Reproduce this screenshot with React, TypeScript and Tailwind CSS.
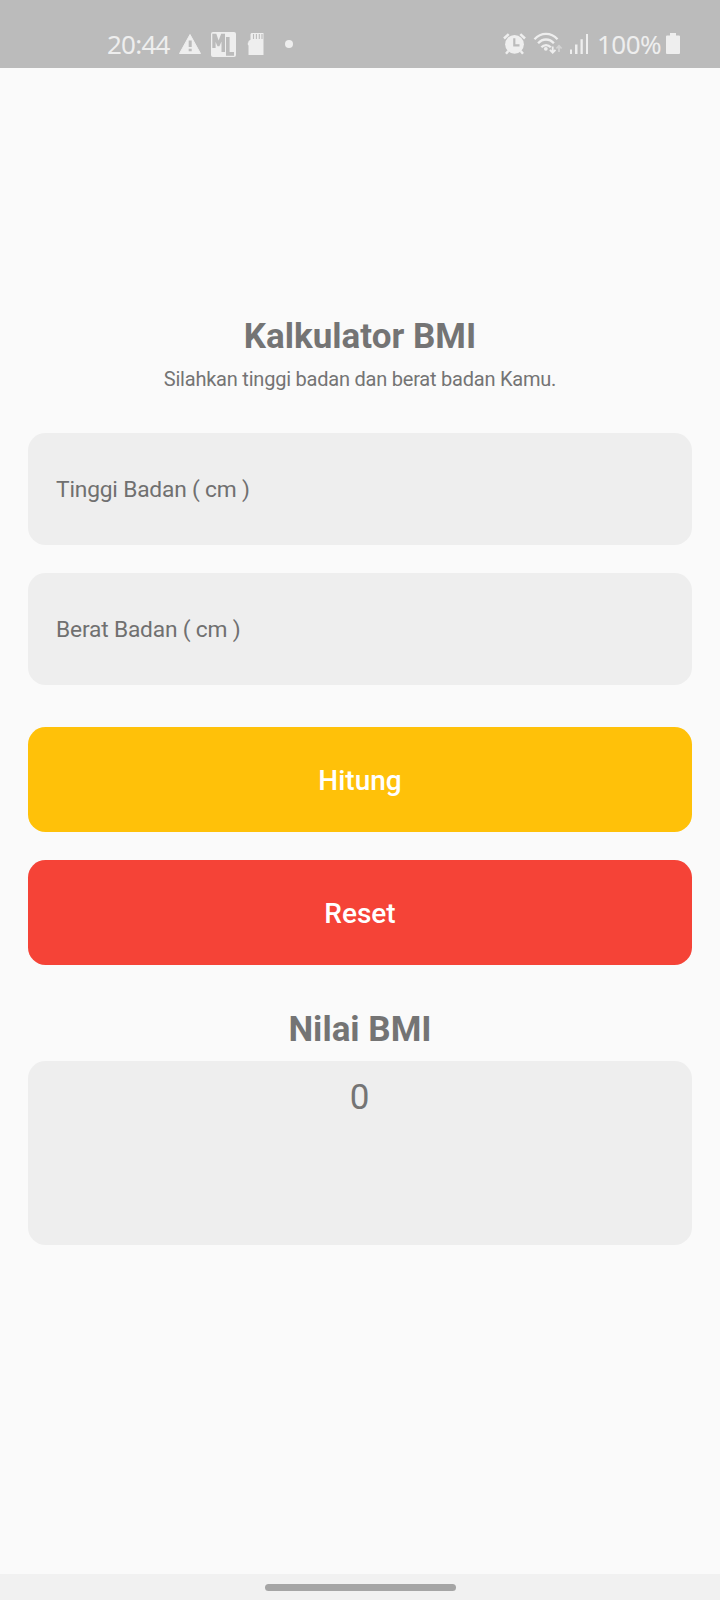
import { useState } from "react";

const fieldClass =
  "h-28 w-full rounded-[17.5px] bg-[#eeeeee] px-7 text-[22.75px] tracking-[-0.18px] text-[#707070] outline-none placeholder:text-[#707070] placeholder:opacity-100";
const buttonClass =
  "h-[105px] w-full rounded-[17.5px] pt-[3px] text-[28px] leading-[34px] font-medium text-white";

function LeftIcons() {
  return (
    <svg className="h-[68px] w-[130px]" viewBox="175 0 130 68" fill="#eeeeee">
      <path d="M190 34.5 200.5 53.5H179.5Z" stroke="#eeeeee" strokeWidth="1" strokeLinejoin="round" />
      <path d="M188.7 40.5h3v6.5h-3zM188.7 48.7h3v2.6h-3z" fill="#bbbbbb" />
      <rect x="211" y="32" width="25" height="25" rx="2" />
      <path
        d="M212.3 48V33.7h4l2.3 6.8 2.6-6.8h3.8V52h-3.5V41.5l-2.1 4.8h-1.9l-1.9-4.3v6ZM226 37h3.6v15h4.4v3.7h-8Z"
        fill="#bbbbbb"
      />
      <path d="M251.5 33h12v22h-15V45.5l-.7-.7v-2l.7-.6V41l2-1.2V34Z" />
      <path d="M253.5 34v5M256.4 34v5M259.3 34v5M262 34v5" stroke="#bbbbbb" strokeWidth="1.1" />
      <circle cx="289" cy="44" r="4" />
    </svg>
  );
}

function RightIcons() {
  return (
    <svg className="h-[68px] w-[90px]" viewBox="501 0 90 68" fill="#eeeeee">
      <circle cx="514.5" cy="44.3" r="9.4" />
      <path
        d="m504 38.5 4.7-4.4M525 38.5l-4.7-4.4M508.3 51l-2.3 2.7M520.7 51l2.3 2.7"
        stroke="#eeeeee"
        strokeWidth="2.5"
        fill="none"
      />
      <path d="M514.3 38.3v7h5.2" stroke="#bbbbbb" strokeWidth="2.2" fill="none" />
      <g fill="none" stroke="#eeeeee" strokeWidth="2.3">
        <path d="M534.5 39.2C541 32.2 551 32.2 557.5 39.2M538.1 43.3C542.5 38.2 549.5 38.2 553.9 43.3M541.4 47.3C544 44.3 548 44.3 550.8 47.3" />
        <path d="M552.7 46.5v6M549.9 49.8l2.8 2.9 2.8-2.9" strokeWidth="1.8" />
        <path d="M559 52v-6M556.4 48.5l2.6-2.8 2.6 2.8" strokeWidth="1.8" stroke="#d3d3d3" />
      </g>
      <circle cx="545.8" cy="48.8" r="1.9" />
      <path d="M570 49.5h2V54h-2zM575 44.5h2.5V54H575zM580.5 39.3h2.3V54h-2.3zM586 34h2v20h-2z" />
    </svg>
  );
}

function StatusBar() {
  return (
    <header className="flex h-[68px] items-start bg-[#bbbbbb] pr-[39px] pl-[107px] font-['Noto_Sans','Open_Sans',sans-serif] text-[26px] text-[#eeeeee]">
      <span className="w-[68px] pt-[26px] leading-9 tracking-[-0.75px]">20:44</span>
      <LeftIcons />
      <span className="flex-1" />
      <RightIcons />
      <span className="w-[74px] pt-[26px] pl-[6px] leading-9 tracking-[-0.5px]">100%</span>
      <svg className="h-[68px] w-4" viewBox="665 0 16 68" fill="#eeeeee">
        <path d="M670 33h6v2.5h3q1 0 1 1V53q0 1-1 1h-12q-1 0-1-1V36.5q0-1 1-1h3Z" />
      </svg>
    </header>
  );
}

export default function App() {
  const [height, setHeight] = useState("");
  const [weight, setWeight] = useState("");
  const [result, setResult] = useState("0");

  const calculate = () => {
    const meters = Number(height) / 100;
    if (meters > 0) setResult((Number(weight) / (meters * meters)).toFixed(1));
  };
  const reset = () => {
    setHeight("");
    setWeight("");
    setResult("0");
  };

  return (
    <div className="flex h-[1600px] w-[720px] flex-col bg-[#fafafa] font-[Roboto,sans-serif] text-[#747474]">
      <StatusBar />
      <main className="flex flex-1 flex-col px-7 pt-[248px] text-center">
        <h1 className="text-[35px] leading-[42px] font-bold">Kalkulator BMI</h1>
        <p className="mt-[9px] text-[20px] leading-6 tracking-[-0.22px]">Silahkan tinggi badan dan berat badan Kamu.</p>
        <div className="mt-[42.4px] flex flex-col gap-7">
          <input className={fieldClass} placeholder="Tinggi Badan ( cm )" value={height} onChange={(e) => setHeight(e.target.value)} />
          <input className={fieldClass} placeholder="Berat Badan ( cm )" value={weight} onChange={(e) => setWeight(e.target.value)} />
        </div>
        <div className="mt-[42px] flex flex-col gap-7">
          <button className={`${buttonClass} bg-[#ffc109]`} onClick={calculate}>Hitung</button>
          <button className={`${buttonClass} bg-[#f54337]`} onClick={reset}>Reset</button>
        </div>
        <h2 className="mt-[43.6px] text-[35px] leading-[42px] font-bold">Nilai BMI</h2>
        <output className="mt-[10.5px] h-[183.75px] rounded-[17.5px] bg-[#eeeeee] pt-[15.5px] pr-[1px] text-[35px] leading-[42px]">{result}</output>
      </main>
      <footer className="flex h-[26px] justify-center bg-[#f1f1f1] pt-[10px]">
        <div className="h-[7px] w-[191px] rounded-full bg-[#a5a5a5]" />
      </footer>
    </div>
  );
}
